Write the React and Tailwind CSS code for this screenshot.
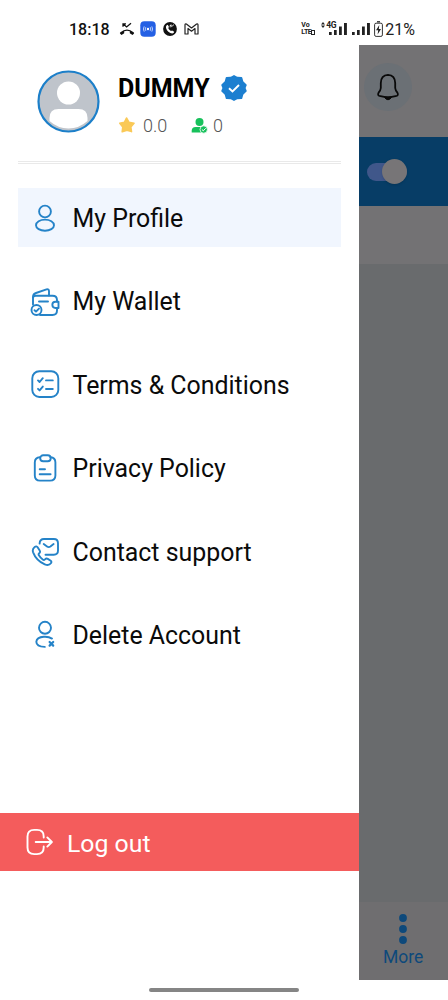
const ProfileIcon = () => (
  <>
    <circle cx="15" cy="8.5" r="5.9" />
    <ellipse cx="15" cy="22.2" rx="9" ry="5.6" />
  </>
);

const WalletIcon = () => (
  <>
    <path d="M3 18.5V11Q3 8 6 7L16.5 3.4Q19 2.8 19 5.3V9.5" />
    <path d="M3 11.5Q3.6 9.7 6 9.7H22.5Q27 9.7 27 14V15.5M27 22V24.5Q27 29 22.5 29H10" />
    <path d="M28.5 15.7H25.5A3.1 3.1 0 0 0 25.5 22H28.5Z" />
    <path d="M9 15.5H18" />
    <circle cx="6.5" cy="24" r="5" />
    <path d="M4.5 24.2L6 25.6L9 22.6" />
  </>
);

const TermsIcon = () => (
  <>
    <rect x="2.3" y="2.2" width="26" height="25.8" rx="7" />
    <path d="M8 11.4L9.6 13L12.8 9.2M8 19.8L9.6 21.4L12.8 17.6M16 11.4H22.8M16 20H22.8" />
  </>
);

const PrivacyIcon = () => (
  <>
    <path d="M10 4.2Q4.8 4.4 4.8 9.5V22.5Q4.8 27.6 10 27.6H20Q25.4 27.6 25.4 22.5V9.5Q25.4 4.4 20.5 4.2" />
    <rect x="10.2" y="2.2" width="10.5" height="6" rx="3" />
    <path d="M9.7 16.2H15M9.7 21.3H20.6" />
  </>
);

const ContactIcon = () => (
  <>
    <path d="M9.6 7.6Q9.8 3 14 3H23.8Q28 3 28 7.3V14.5Q28 18.7 23.8 18.7H15.5" />
    <path d="M13.7 8.1L17 10.5Q18.7 11.7 20.4 10.5L23.6 8.1" />
    <path d="M7.6 11.3L9.7 14.6Q10.6 16.2 9.2 17.3Q8.2 18.2 8.9 19.3Q10.5 22 13 23.8Q14 24.4 15 23.4Q16.4 22 17.8 22.9L20.7 24.8Q22 25.8 20.9 27.2Q18.8 30 14.8 28.3Q6.2 24.5 3.1 16.3Q2 12.9 4.7 10.9Q6.5 9.6 7.6 11.3Z" />
  </>
);

const DeleteIcon = () => (
  <>
    <circle cx="15" cy="8.8" r="6" />
    <path d="M22 19.6Q18.6 17.4 13.8 17.8Q6.7 18.4 6.3 22.8Q6.4 27.8 14.8 27.9" />
    <path strokeWidth="2.2" d="M19.6 23L23.2 26.6M23.2 23L19.6 26.6" />
  </>
);

const LogoutIcon = () => (
  <>
    <path d="M18.7 10.5V9.4Q18.7 2.9 12 2.9H9.2Q2.5 2.9 2.5 9.5V20.5Q2.5 27.1 9.2 27.1H12Q18.7 27.1 18.7 20.6V19.5" />
    <path d="M10.7 15H26.8M22.3 10.4L26.9 15L22.3 19.6" />
  </>
);

const MENU_ITEMS = [
  { label: 'My Profile', icon: ProfileIcon, active: true },
  { label: 'My Wallet', icon: WalletIcon },
  { label: 'Terms & Conditions', icon: TermsIcon },
  { label: 'Privacy Policy', icon: PrivacyIcon },
  { label: 'Contact support', icon: ContactIcon },
  { label: 'Delete Account', icon: DeleteIcon },
];

function LineIcon({ icon: Icon }) {
  return (
    <svg viewBox="0 0 30 30" fill="none" stroke="currentColor" strokeWidth="1.9"
      strokeLinecap="round" strokeLinejoin="round" className="w-[30px] h-[30px] shrink-0">
      <Icon />
    </svg>
  );
}

function SignalBars({ className }) {
  return (
    <svg viewBox="0 0 18 12" className={className} fill="#222">
      <rect x="0" y="9" width="2.7" height="3" />
      <rect x="5" y="7" width="2.7" height="5" />
      <rect x="10" y="3.5" width="2.8" height="8.5" />
      <rect x="15" y="0" width="2.9" height="12" />
    </svg>
  );
}

function StatusBar() {
  return (
    <header className="h-[45px] shrink-0 flex items-start justify-between pl-[69px] pr-[33px] pt-[19px] text-[#111]">
      <div className="flex items-center h-5">
        <span className="text-[16px] font-medium w-[50px] pt-px">18:18</span>
        <svg viewBox="0 0 16 14" className="w-4 h-3.5" fill="none" stroke="#111" strokeWidth="1.3">
          <path d="M4 4.8V1.8H7M4.3 2L7.6 5L12 1.3" />
          <path d="M1.2 11.8Q0.4 11 1.4 10.2Q8 4.8 14.6 10.2Q15.6 11 14.8 11.8L13.5 13L10.8 11.2V9.2Q8 8.3 5.2 9.2V11.2L2.5 13Z" fill="#111" stroke="none" />
        </svg>
        <svg viewBox="0 0 16 16" className="w-4 h-4 ml-[5px]" fill="none" stroke="#fff">
          <rect x="0.3" y="0.3" width="15.4" height="15.4" rx="4" fill="#2460e4" stroke="none" />
          <circle cx="8" cy="8" r="1.2" fill="#fff" stroke="none" />
          <path d="M5.8 6.2Q4.6 8 5.8 9.8M10.2 6.2Q11.4 8 10.2 9.8M4.2 5.4Q2.6 8 4.2 10.6M11.8 5.4Q13.4 8 11.8 10.6" strokeWidth="0.7" />
        </svg>
        <svg viewBox="0 0 14 14" className="w-3.5 h-3.5 ml-[7px]">
          <circle cx="7" cy="7" r="6.9" fill="#111" />
          <path d="M3.7 3.2L4.7 2.8L6 5L5.2 6Q6 8 8 9.1L9.1 8.4L11.2 9.7L10.8 10.8Q9.5 12 7.3 11Q2.9 8.7 2.9 4.8Z" fill="#fff" />
          <path d="M7.2 3.2L8.6 4.6L11 2.6M7.2 5.4V3.2H9" fill="none" stroke="#fff" strokeWidth="0.8" />
        </svg>
        <svg viewBox="0 0 15 12" className="w-[15px] h-3 ml-[7px]" fill="#fff" stroke="#222" strokeWidth="1.2" strokeLinejoin="round">
          <path d="M1 2Q1 0.7 2.4 1L7.5 5L12.6 1Q14 0.7 14 2V11H11V5.5L7.5 8.2L4 5.5V11H1Z" />
        </svg>
      </div>
      <div className="flex items-center h-5 text-[#222]">
        <div className="w-[20px] text-[7px] leading-[7px] font-bold">
          <div>Vo</div>
          <div className="flex items-center">
            <span className="tracking-[-0.4px]">LTE</span>
            <span className="w-1 h-[5px] border border-[#222]" />
          </div>
        </div>
        <div className="relative w-[26px] h-3">
          <SignalBars className="w-[18px] h-3 ml-[8px]" />
          <svg viewBox="0 0 4 6" className="absolute left-0 -top-px w-1 h-1.5" fill="#222">
            <path d="M0 2.4L2 0L4 2.4ZM0 3.6H4L2 6Z" />
          </svg>
          <span className="absolute left-[5px] -top-px h-[7px] text-[8.5px] leading-[7px] font-bold tracking-[-0.5px]">4G</span>
        </div>
        <SignalBars className="w-[18px] h-3 ml-[5px]" />
        <svg viewBox="0 0 9 16" className="w-[9px] h-4 ml-1" fill="none" stroke="#333">
          <path d="M3 0.8H6" strokeWidth="1.4" />
          <rect x="0.6" y="2.2" width="7.8" height="13.2" rx="1.5" />
          <path d="M5.3 4L2 9.2H4.2L3.6 13.6L7 8H4.8Z" fill="#222" stroke="none" />
        </svg>
        <span className="text-[16px] ml-[2px] pt-px">21%</span>
      </div>
    </header>
  );
}

function ProfileHeader() {
  return (
    <div className="mx-[18px] h-[119px] pl-[19px] pt-[25px] flex items-start border-b-[3px] border-double border-[#e9e9e9]">
      <svg viewBox="0 0 64 64" className="w-[64px] h-[64px] shrink-0">
        <circle cx="31.5" cy="31.5" r="30" fill="#bfc4cb" stroke="#1c7fc9" strokeWidth="2.2" />
        <circle cx="31.5" cy="23" r="11.5" fill="#fff" />
        <path d="M12.5 51V48Q12.5 39 21.5 39H41.5Q50.5 39 50.5 48V51Q42 58.5 31.5 58.5Q21 58.5 12.5 51Z" fill="#fff" />
      </svg>
      <div className="ml-[17px] pt-[3px]">
        <div className="flex items-center h-[30px]">
          <span className="text-[25px] font-bold text-black w-[102px] pt-px">DUMMY</span>
          <svg viewBox="0 0 28 28" className="w-7 h-7">
            <path d="M14 1.8L17.3 3.6L21.5 3.8L22.7 7.9L26 11L24.8 14L26 17L22.7 20.1L21.5 24.2L17.3 24.4L14 26.2L10.7 24.4L6.5 24.2L5.3 20.1L2 17L3.2 14L2 11L5.3 7.9L6.5 3.8L10.7 3.6Z"
              fill="#1c7fd0" stroke="#1c7fd0" strokeWidth="1.5" strokeLinejoin="round" />
            <path d="M9 14.2L12.5 17.5L19 11" fill="none" stroke="#fff" strokeWidth="1.9" />
          </svg>
        </div>
        <div className="flex items-center h-5 mt-[12px] text-[18px] font-light text-[#555]">
          <svg viewBox="0 0 18 18" className="w-[18px] h-[18px]">
            <path d="M8.5 2L11 6.3L16 7.3L12.8 11L13.5 15.6L9 14.2L4.2 15.8L4.8 11L1.8 7.2L6.4 6.4Z" fill="#fac957" stroke="#fac957" strokeWidth="1.6" strokeLinejoin="round" />
          </svg>
          <span className="ml-[7px] w-[48px]">0.0</span>
          <svg viewBox="0 0 17 17" className="w-[17px] h-[17px]" fill="#17c15b">
            <circle cx="8.5" cy="5" r="4" />
            <path d="M0.7 15.6V13.8Q0.7 10 4.6 10H12L14 15.6Z" />
            <circle cx="12.7" cy="12.5" r="3.7" stroke="#fff" strokeWidth="0.8" />
            <path d="M10.9 12.5L12.3 13.8L14.7 11.3" fill="none" stroke="#fff" />
          </svg>
          <span className="ml-[5px]">0</span>
        </div>
      </div>
    </div>
  );
}

function Drawer() {
  return (
    <aside className="w-[358.5px] shrink-0 bg-white flex flex-col">
      <ProfileHeader />
      <nav className="mt-[24px] mx-[18px] flex flex-col gap-[24.4px]">
        {MENU_ITEMS.map(({ label, icon, active }) => (
          <div key={label} className={`h-[59px] pl-3 flex items-center text-[#2583c8] ${active ? 'bg-[#f1f6fe]' : ''}`}>
            <LineIcon icon={icon} />
            <span className="ml-[12.5px] pt-[2.5px] text-[24.9px] text-[#0b0b0b] whitespace-nowrap">{label}</span>
          </div>
        ))}
      </nav>
      <button className="mt-auto mb-[109px] h-[58px] pl-[25px] flex items-center bg-[#f45c5c] text-white">
        <LineIcon icon={LogoutIcon} />
        <span className="ml-3 pt-[4px] text-[24.8px]">Log out</span>
      </button>
    </aside>
  );
}

// Dimmed home screen that stays visible next to the open drawer
function DimmedPage() {
  return (
    <main className="flex-1 flex flex-col bg-[#737274] overflow-hidden">
      <div className="h-[92px] pl-[5px] flex items-center pb-2">
        <div className="w-12 h-12 rounded-full bg-[#6b7075] flex items-center justify-center">
          <svg viewBox="0 0 24 28" className="w-6 h-7" fill="none" stroke="#090909" strokeWidth="1.8" strokeLinejoin="round">
            <path d="M12 1.8Q4.9 2.2 4.8 10V15Q4.6 17.4 2.6 19.7Q1 22.8 4.5 23.2Q12 25 19.5 23.2Q23 22.8 21.4 19.7Q19.4 17.4 19.2 15V10Q19.1 2.2 12 1.8Z" />
            <path d="M8.5 24.5Q12 29 15.5 24.5Z" fill="#090909" strokeWidth="1" />
          </svg>
        </div>
      </div>
      <div className="h-[69px] bg-[#073d66] pl-2 flex items-center">
        <div className="w-[40px] h-[18px] rounded-full bg-[#40578a] flex items-center justify-end">
          <div className="w-[25px] h-[25px] shrink-0 rounded-full bg-[#777577] shadow-sm" />
        </div>
      </div>
      <div className="h-[58px]" />
      <div className="flex-1 bg-[#696b6d]" />
      <div className="h-[78px] flex flex-col items-center pt-3 bg-[#6f6e70] text-[#0d497b]">
        <svg viewBox="0 0 8 30" className="w-2 h-[30px]" fill="currentColor">
          <circle cx="4" cy="4" r="3.9" />
          <circle cx="4" cy="15" r="3.9" />
          <circle cx="4" cy="26" r="3.9" />
        </svg>
        <span className="text-[17.5px] leading-6 pt-px">More</span>
      </div>
    </main>
  );
}

export default function App() {
  return (
    <div className="w-[448px] h-[1000px] flex flex-col bg-white overflow-hidden font-[Roboto,sans-serif]">
      <StatusBar />
      <div className="h-[935px] flex">
        <Drawer />
        <DimmedPage />
      </div>
      <div className="flex-1 flex justify-center pt-[8px]">
        <div className="w-[150px] h-[3.5px] rounded-full bg-[#858585]" />
      </div>
    </div>
  );
}
